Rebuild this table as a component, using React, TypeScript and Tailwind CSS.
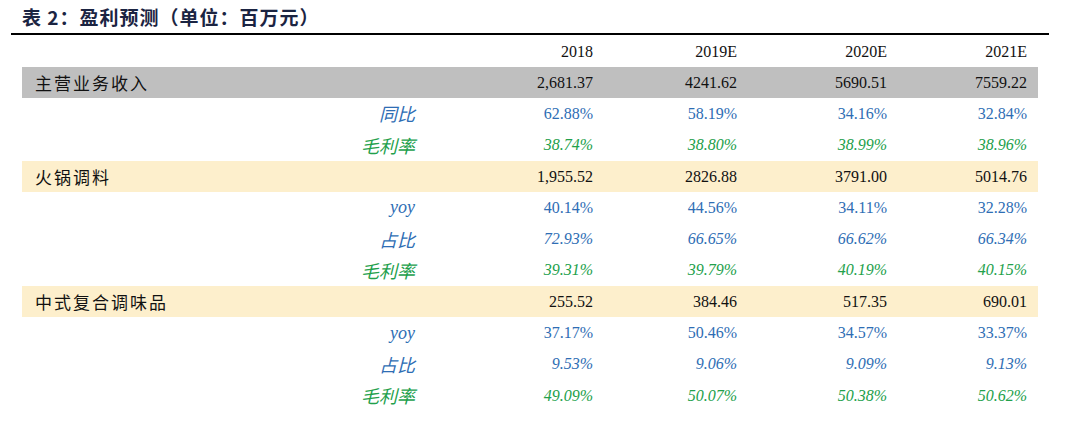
const serif = "font-['Liberation_Serif','Noto_Sans_CJK_SC',serif]"
const cjk = "font-['Noto_Sans_CJK_SC',sans-serif]"

type Row = {
  label: string
  kind: 'gray' | 'yellow' | 'blue' | 'blueItalic' | 'green'
  values: string[]
}

const rows: Row[] = [
  { label: '主营业务收入', kind: 'gray', values: ['2,681.37', '4241.62', '5690.51', '7559.22'] },
  { label: '同比', kind: 'blueItalic', values: ['62.88%', '58.19%', '34.16%', '32.84%'] },
  { label: '毛利率', kind: 'green', values: ['38.74%', '38.80%', '38.99%', '38.96%'] },
  { label: '火锅调料', kind: 'yellow', values: ['1,955.52', '2826.88', '3791.00', '5014.76'] },
  { label: 'yoy', kind: 'blue', values: ['40.14%', '44.56%', '34.11%', '32.28%'] },
  { label: '占比', kind: 'blueItalic', values: ['72.93%', '66.65%', '66.62%', '66.34%'] },
  { label: '毛利率', kind: 'green', values: ['39.31%', '39.79%', '40.19%', '40.15%'] },
  { label: '中式复合调味品', kind: 'yellow', values: ['255.52', '384.46', '517.35', '690.01'] },
  { label: 'yoy', kind: 'blue', values: ['37.17%', '50.46%', '34.57%', '33.37%'] },
  { label: '占比', kind: 'blueItalic', values: ['9.53%', '9.06%', '9.09%', '9.13%'] },
  { label: '毛利率', kind: 'green', values: ['49.09%', '50.07%', '50.38%', '50.62%'] },
]

const colWidths = ['w-[173px]', 'w-[144px]', 'w-[150px]', 'w-[140px]']

function TableRow({ row }: { row: Row }) {
  const isCategory = row.kind === 'gray' || row.kind === 'yellow'
  const bg = row.kind === 'gray' ? 'bg-[#bfbfbf]' : row.kind === 'yellow' ? 'bg-[#fdefcc]' : ''

  // 同比 / yoy numbers are upright blue, 占比 italic blue, 毛利率 italic green
  let labelCls = ''
  let numCls = 'text-[#111]'
  if (row.kind === 'blueItalic') {
    labelCls = 'text-[#2e6db4] italic'
    numCls = row.label === '同比' ? 'text-[#2e6db4]' : 'text-[#2e6db4] italic'
  } else if (row.kind === 'blue') {
    labelCls = 'text-[#2e6db4] italic'
    numCls = 'text-[#2e6db4]'
  } else if (row.kind === 'green') {
    labelCls = 'text-[#22a04b] italic'
    numCls = 'text-[#22a04b] italic'
  }

  return (
    <div className={`flex items-center h-[31.3px] ${bg}`}>
      {isCategory ? (
        <div className="w-[398px] flex items-center">
          <div className="w-[13px] shrink-0" />
          <span className={`text-[17px] tracking-[2px] text-[#111] ${cjk}`}>{row.label}</span>
        </div>
      ) : (
        <div
          className={`w-[398px] pr-[5px] text-right text-[18px] ${labelCls} ${
            row.label === 'yoy' ? serif : cjk
          }`}
        >
          {row.label}
        </div>
      )}
      {row.values.map((v, i) => (
        <div key={i} className={`${colWidths[i]} text-right text-[16px] ${serif} ${numCls}`}>
          {v}
        </div>
      ))}
    </div>
  )
}

export default function App() {
  return (
    <div className="w-[1067px] h-[426px] bg-white overflow-hidden">
      <div className="h-[33px] pl-[22px] pt-[4px]">
        <h1 className={`text-[19px] font-bold leading-[26px] tracking-[1px] text-[#1b2442] ${cjk}`}>
          表 2：盈利预测（单位：百万元）
        </h1>
      </div>
      <div className="ml-[11px] w-[1038px] h-[2px] bg-black" />
      <div className="pl-[22px] pt-[1px]">
        <div className="w-[1016px]">
          <div className="flex items-center h-[31px]">
            <div className="w-[398px]" />
            {['2018', '2019E', '2020E', '2021E'].map((y, i) => (
              <div key={y} className={`${colWidths[i]} text-right text-[16px] text-[#111] ${serif}`}>
                {y}
              </div>
            ))}
          </div>
          {rows.map((r, i) => (
            <TableRow key={i} row={r} />
          ))}
        </div>
      </div>
    </div>
  )
}
